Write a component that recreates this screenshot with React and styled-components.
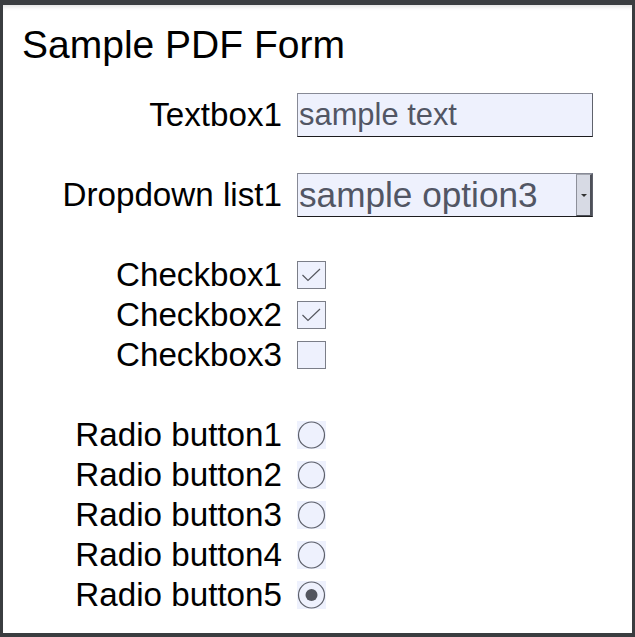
import React from 'react';
import styled, { createGlobalStyle } from 'styled-components';

const GlobalStyle = createGlobalStyle`
  html, body {
    margin: 0;
    padding: 0;
    background: #3a3d40;
  }
  body {
    font-family: "Liberation Sans", Arial, sans-serif;
  }
`;

const Page = styled.div`
  margin: 5px 3px 4px 3px;
  height: 628px;
  background: #fff;
  box-shadow: inset 0 5px 4px -3px rgba(0, 0, 0, 0.12);
  box-sizing: border-box;
  padding: 20px 0 0 19px;
`;

const Title = styled.h1`
  margin: 0;
  font-weight: normal;
  font-size: 39px;
  line-height: 40px;
  color: #000;
`;

const Form = styled.div`
  display: grid;
  grid-template-columns: 260px 296px;
  column-gap: 15px;
  margin-top: 28px;
`;

const Label = styled.div`
  display: flex;
  align-items: center;
  justify-content: flex-end;
  font-size: 33.2px;
  color: #000;
  height: ${({ h }) => h}px;
  margin-top: ${({ gap }) => gap || 0}px;
  white-space: nowrap;
`;

const Cell = styled.div`
  display: flex;
  align-items: center;
  height: ${({ h }) => h}px;
  margin-top: ${({ gap }) => gap || 0}px;
`;

const TextBox = styled.div`
  box-sizing: border-box;
  width: 296px;
  height: 44px;
  background: #eef1fd;
  border: 1px solid #878a96;
  border-right-color: #5f626c;
  border-bottom-color: #1c1c1e;
  color: #525664;
  font-size: ${({ size }) => size}px;
  line-height: 42px;
  padding-left: 1px;
  display: flex;
  align-items: center;
  overflow: hidden;
  white-space: nowrap;
`;

const Select = styled(TextBox)`
  justify-content: space-between;
  padding-right: 0;
`;

const SelectButton = styled.div`
  box-sizing: border-box;
  width: 16px;
  height: 42px;
  background: #d7dae4;
  border: 1px solid #4d5058;
  border-top-color: #a4a7b0;
  border-left-color: #8d909a;
  border-right-width: 2px;
  display: flex;
  align-items: center;
  justify-content: center;
`;

const Arrow = styled.span`
  width: 0;
  height: 0;
  border-left: 3px solid transparent;
  border-right: 3px solid transparent;
  border-top: 3px solid #333;
`;

const Box = styled.div`
  width: 29px;
  height: 28px;
  box-sizing: border-box;
  background: #eef1fd;
  border: ${({ framed }) => (framed ? '1px solid #7b7e88' : 'none')};
`;

const CheckMark = () => (
  <svg width="27" height="26" viewBox="0 0 27 26">
    <polyline points="4.5,13 10,18.5 22,7" fill="none" stroke="#55575e" strokeWidth="1.2" />
  </svg>
);

const RadioMark = ({ on }) => (
  <svg width="29" height="28" viewBox="0 0 29 28">
    <circle cx="14.5" cy="14" r="13" fill="none" stroke="#5d606a" strokeWidth="1.2" />
    {on && <circle cx="14.5" cy="14" r="6" fill="#53565f" />}
  </svg>
);

const checkboxes = [
  { label: 'Checkbox1', on: true },
  { label: 'Checkbox2', on: true },
  { label: 'Checkbox3', on: false },
];

const radios = [1, 2, 3, 4, 5].map((n) => ({ label: `Radio button${n}`, on: n === 5 }));

const App = () => (
  <>
    <GlobalStyle />
    <Page>
      <Title>Sample PDF Form</Title>
      <Form>
        <Label h={44}>Textbox1</Label>
        <Cell h={44}>
          <TextBox size={30.9}>sample text</TextBox>
        </Cell>

        <Label h={44} gap={36}>Dropdown list1</Label>
        <Cell h={44} gap={36}>
          <Select size={35.2}>
            <span>sample option3</span>
            <SelectButton><Arrow /></SelectButton>
          </Select>
        </Cell>

        {checkboxes.map((c, i) => (
          <React.Fragment key={c.label}>
            <Label h={40} gap={i === 0 ? 38 : 0}>{c.label}</Label>
            <Cell h={40} gap={i === 0 ? 38 : 0}>
              <Box framed>{c.on && <CheckMark />}</Box>
            </Cell>
          </React.Fragment>
        ))}

        {radios.map((r, i) => (
          <React.Fragment key={r.label}>
            <Label h={40} gap={i === 0 ? 40 : 0}>{r.label}</Label>
            <Cell h={40} gap={i === 0 ? 40 : 0}>
              <Box><RadioMark on={r.on} /></Box>
            </Cell>
          </React.Fragment>
        ))}
      </Form>
    </Page>
  </>
);

export default App;
